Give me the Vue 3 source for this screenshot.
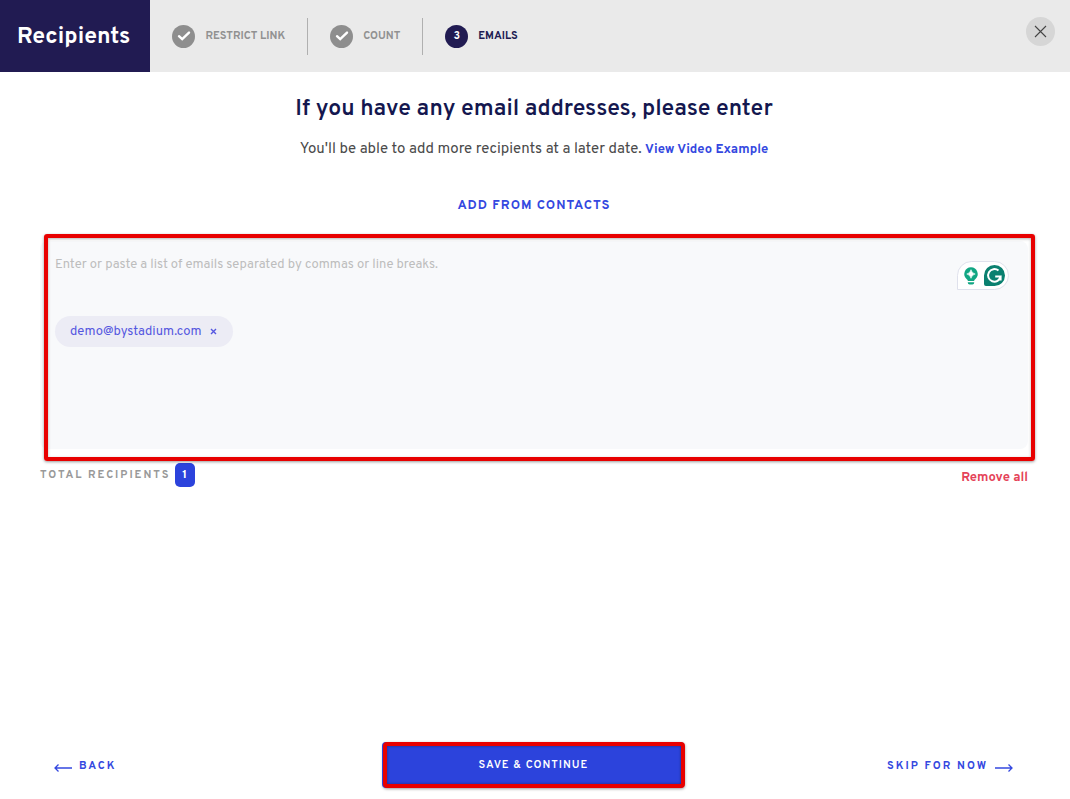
<script setup>
import { ref, computed } from 'vue'

const steps = [
  { label: 'Restrict Link', done: true },
  { label: 'Count', done: true },
  { label: 'Emails', done: false },
]
const draft = ref('')
const emails = ref(['demo@bystadium.com'])
const total = computed(() => emails.value.length)
const remove = (i) => emails.value.splice(i, 1)
</script>

<template>
  <div class="page">
    <header class="topbar">
      <h1 class="title">Recipients</h1>
      <ol class="steps">
        <li v-for="(step, i) in steps" :key="step.label" class="step" :class="{ current: !step.done }">
          <span class="dot">
            <svg v-if="step.done" width="14" height="12" viewBox="0 0 14 12" aria-hidden="true">
              <path d="M2 6.2 5.2 9.2 12 2.6" fill="none" stroke="currentColor" stroke-width="2.4" stroke-linecap="round" />
            </svg>
            <template v-else>{{ i + 1 }}</template>
          </span>
          <span class="step-label">{{ step.label }}</span>
        </li>
      </ol>
      <button class="close" type="button" aria-label="Close">
        <svg width="13" height="13" viewBox="0 0 13 13" aria-hidden="true">
          <path d="M1 1 12 12M12 1 1 12" fill="none" stroke="currentColor" stroke-width="1.1" />
        </svg>
      </button>
    </header>

    <main class="main">
      <h2 class="heading">If you have any email addresses, please enter</h2>
      <p class="intro">
        You'll be able to add more recipients at a later date.
        <a class="video" href="#">View Video Example</a>
      </p>
      <button class="contacts" type="button">Add from contacts</button>

      <section class="panel">
        <textarea
          v-model="draft"
          class="entry"
          rows="1"
          aria-label="Email addresses"
          placeholder="Enter or paste a list of emails separated by commas or line breaks."
        ></textarea>
        <ul class="chips">
          <li v-for="(email, i) in emails" :key="email" class="chip">
            {{ email }}
            <button class="chip-remove" type="button" :aria-label="'Remove ' + email" @click="remove(i)">
              <svg width="7" height="7" viewBox="0 0 7 7" aria-hidden="true">
                <path d="M1 1 6 6M6 1 1 6" fill="none" stroke="currentColor" stroke-width="1.4" />
              </svg>
            </button>
          </li>
        </ul>
        <div class="assistant">
          <svg width="52" height="30" viewBox="0 0 52 30" aria-hidden="true">
            <path d="M.5 28.500V14.500A14 14 0 0 1 14.500.5H37.500A14 14 0 0 1 37.500 28.500Z" fill="#fff" stroke="#dfe1ec" />
            <path d="M14 6.300a6.700 6.700 0 0 1 4.200 11.900c-.7.600-1 1.100-1.100 1.800h-6.200c-.1-.7-.4-1.200-1.100-1.800A6.700 6.700 0 0 1 14 6.300Z" fill="#11a683" />
            <path d="M14 8.700q.8 3.500 4.200 4.300-3.400.8-4.200 4.300-.8-3.500-4.200-4.300 3.400-.8 4.200-4.300Z" fill="#fff" stroke="#fff" stroke-width=".6" />
            <path d="M10.800 21.200h6.400v.6a1.800 1.800 0 0 1-1.800 1.800h-2.800a1.800 1.800 0 0 1-1.800-1.800Z" fill="#11a683" />
            <path d="M37.500 4A10.500 10.500 0 1 1 37.500 25H29Q27 25 27 23V14.500A10.500 10.500 0 0 1 37.500 4Z" fill="#0a8070" />
            <path d="M41.500 9.600A6.300 6.300 0 1 0 43.600 15.500H38.200M43.600 15.500V19.500" fill="none" stroke="#fff" stroke-width="2" />
          </svg>
        </div>
        <div class="frame"></div>
      </section>

      <div class="summary">
        <span class="total">Total recipients <output class="count">{{ total }}</output></span>
        <button class="remove-all" type="button" @click="emails = []">Remove all</button>
      </div>
    </main>

    <footer class="footer">
      <button class="nav" type="button">
        <svg class="arrow" width="18" height="10" viewBox="0 0 18 10" aria-hidden="true">
          <path d="M18 5H1M4.500 1.500 1 5 4.500 8.500" fill="none" stroke="currentColor" stroke-width="1.300" />
        </svg>
        Back
      </button>
      <button class="save" type="button">Save &amp; Continue</button>
      <button class="nav next" type="button">
        Skip for now
        <svg class="arrow" width="18" height="10" viewBox="0 0 18 10" aria-hidden="true">
          <path d="M0 5H17M13.500 1.500 17 5 13.500 8.500" fill="none" stroke="currentColor" stroke-width="1.300" />
        </svg>
      </button>
    </footer>
  </div>
</template>

<style>
body {
  margin: 0;
  background: #fff;
}
</style>

<style scoped>
.page {
  display: flex;
  flex-direction: column;
  min-height: 100vh;
  box-sizing: border-box;
  font-family: Overpass, Roboto, "Liberation Sans", sans-serif;
  color: #4a4a4a;
}
button {
  margin: 0;
  padding: 0;
  border: 0;
  background: none;
  font: inherit;
  color: inherit;
  cursor: pointer;
}
svg {
  display: block;
}
.topbar {
  display: flex;
  align-items: stretch;
  height: 72px;
  background: #eaeaea;
}
.title {
  display: flex;
  align-items: center;
  margin: 0;
  padding: 3px 20px 0 17px;
  background: #211b52;
  color: #fff;
  font-size: 23px;
  font-weight: 700;
}
.steps {
  display: flex;
  align-items: center;
  margin: 0;
  padding: 0;
  list-style: none;
}
.step {
  display: flex;
  align-items: center;
  gap: 10px;
  height: 37px;
  padding: 0 22px;
  color: #919191;
  font-size: 11px;
  font-weight: 700;
  text-transform: uppercase;
}
.step + .step {
  border-left: 1px solid #b0b0b0;
}
.step.current {
  color: #211b52;
}
.dot {
  display: flex;
  align-items: center;
  justify-content: center;
  width: 23px;
  height: 23px;
  border-radius: 50%;
  background: #8e8e8e;
  color: #fff;
}
.current .dot {
  background: #211b52;
}
.close {
  display: flex;
  align-items: center;
  justify-content: center;
  width: 29px;
  height: 29px;
  margin: 17px 15px 0 auto;
  border-radius: 50%;
  background: #d6d6d6;
  color: #444;
}
.main {
  display: flex;
  flex: 1;
  flex-direction: column;
  align-items: center;
  padding: 22px 42px 0 40px;
}
.heading {
  margin: 0;
  color: #14174f;
  font-size: 23px;
  font-weight: 600;
  line-height: 32px;
}
.intro {
  margin: 14px 0 0;
  font-size: 15px;
  line-height: 20px;
}
.video {
  color: #3448e0;
  font-size: 13px;
  font-weight: 700;
  text-decoration: none;
}
.contacts {
  margin-top: 36px;
  color: #3448e0;
  font-size: 13px;
  font-weight: 700;
  line-height: 20px;
  letter-spacing: 1px;
  text-transform: uppercase;
}
.panel {
  position: relative;
  align-self: stretch;
  box-sizing: border-box;
  min-height: 208px;
  margin-top: 25px;
  padding: 14px 15px;
  border-radius: 8px;
  background: #f8f9fb;
}
.entry {
  display: block;
  box-sizing: border-box;
  width: 100%;
  height: 61px;
  padding: 0;
  border: 0;
  outline: 0;
  resize: none;
  background: none;
  color: #4a4a4a;
  font: inherit;
  font-size: 13px;
  line-height: 20px;
}
.entry::placeholder {
  color: #bdbdbd;
  opacity: 1;
}
.chips {
  display: flex;
  flex-wrap: wrap;
  gap: 8px;
  margin: 0;
  padding: 0;
  list-style: none;
}
.chip {
  display: flex;
  align-items: center;
  gap: 9px;
  height: 31px;
  padding: 0 16px 0 15px;
  border-radius: 16px;
  background: #ececf5;
  color: #5557e0;
  font-size: 13px;
}
.assistant {
  position: absolute;
  top: 20px;
  right: 19px;
}
.frame {
  position: absolute;
  inset: -7px -7px -12px 4px;
  border: 4px solid #e80000;
  border-radius: 3px;
  box-shadow: 0 1px 3px rgba(0, 0, 0, 0.4), inset 0 1px 3px rgba(0, 0, 0, 0.3);
  pointer-events: none;
}
.summary {
  display: flex;
  align-self: stretch;
  align-items: flex-start;
  justify-content: space-between;
  margin-top: 14px;
}
.total {
  display: flex;
  align-items: center;
  gap: 4px;
  color: #999;
  font-size: 11px;
  font-weight: 700;
  line-height: 24px;
  letter-spacing: 2px;
  text-transform: uppercase;
}
.count {
  width: 20px;
  border-radius: 5px;
  background: #2c43dc;
  color: #fff;
  font-size: 12px;
  letter-spacing: 0;
  text-align: center;
}
.remove-all {
  padding-top: 3px;
  color: #e54358;
  font-size: 13px;
  font-weight: 700;
  line-height: 24px;
}
.footer {
  display: grid;
  grid-template-columns: 1fr 302px 1fr;
  align-items: center;
  padding: 0 57px 11px 54px;
}
.nav {
  display: flex;
  align-items: center;
  gap: 7px;
  padding-top: 1px;
  color: #3448e0;
  font-size: 11px;
  font-weight: 700;
  letter-spacing: 2px;
  text-transform: uppercase;
}
.arrow {
  margin-top: 4px;
}
.next {
  justify-self: end;
}
.save {
  height: 46px;
  border: 4px solid #e80000;
  border-radius: 4px;
  background: #2c43dc;
  box-shadow: -1px 0 0 #2c43dc, 0 1px 3px rgba(0, 0, 0, 0.4), inset 0 0 3px rgba(0, 0, 0, 0.4);
  color: #fff;
  font-size: 11px;
  font-weight: 600;
  letter-spacing: 1px;
  text-transform: uppercase;
}
</style>
